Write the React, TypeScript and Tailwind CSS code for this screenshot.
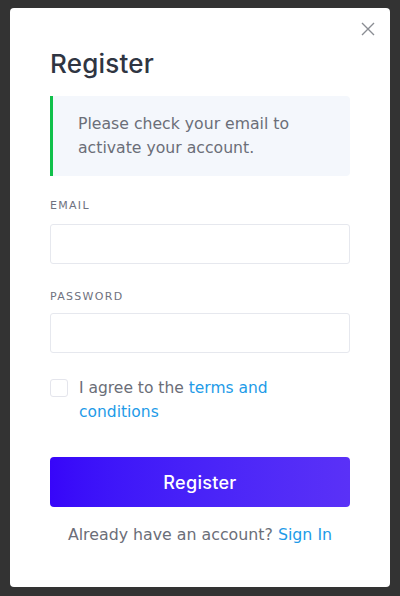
import React from "react";

export default function App() {
  const body = { fontFamily: "'DejaVu Sans', Verdana, sans-serif" };
  return (
    <div className="w-[400px] h-[596px] bg-[#333333] pt-[8px] px-[10px]" style={body}>
      <div className="relative bg-white rounded-[4px] h-[579px] px-[40px] pt-[40px]">
        <button className="absolute right-[15px] top-[14px] w-[14px] h-[14px] text-[#8a8d93]">
          <svg viewBox="0 0 14 14" width="14" height="14" fill="none" stroke="currentColor" strokeWidth="1.4">
            <path d="M1 1 L13 13 M13 1 L1 13" />
          </svg>
        </button>
        <h1 className="text-[26px] leading-[32px] text-[#2f3542] font-medium tracking-[0.2px]" style={{ fontFamily: "Inter, sans-serif" }}>
          Register
        </h1>
        <div className="mt-[16px] bg-[#f4f7fc] border-l-[3px] border-[#10c04a] rounded-r-[4px] h-[80px] pl-[25px] pr-[10px] pt-[16px] text-[15.7px] leading-[24px] text-[#6b6e78]">
          Please check your email to
          <br />
          activate your account.
        </div>
        <div className="mt-[22px] text-[11px] leading-[16px] tracking-[1.3px] text-[#6f7280] uppercase">Email</div>
        <div className="mt-[10px] h-[40px] border border-[#e6e8ee] rounded-[3px]" />
        <div className="mt-[25px] text-[11px] leading-[16px] tracking-[1.3px] text-[#6f7280] uppercase">Password</div>
        <div className="mt-[8px] h-[40px] border border-[#e6e8ee] rounded-[3px]" />
        <div className="mt-[23px] flex items-start gap-[11px]">
          <div className="mt-[3px] w-[18px] h-[18px] shrink-0 border-[1.5px] border-[#e4e5ec] rounded-[3px]" />
          <div className="text-[15.5px] leading-[24px] text-[#6b6e78]">
            I agree to the <span className="text-[#1e9be8]">terms and</span>
            <br />
            <span className="text-[#1e9be8]">conditions</span>
          </div>
        </div>
        <button
          className="mt-[33px] w-full h-[50px] rounded-[4px] bg-gradient-to-r from-[#3705f9] to-[#5a31f7] text-white text-[18px] font-medium tracking-[0.3px]"
          style={{ fontFamily: "Inter, sans-serif" }}
        >
          Register
        </button>
        <div className="mt-[16px] text-center text-[15.8px] leading-[24px] text-[#6b6e78]">
          Already have an account? <span className="text-[#1e9be8]">Sign In</span>
        </div>
      </div>
    </div>
  );
}
